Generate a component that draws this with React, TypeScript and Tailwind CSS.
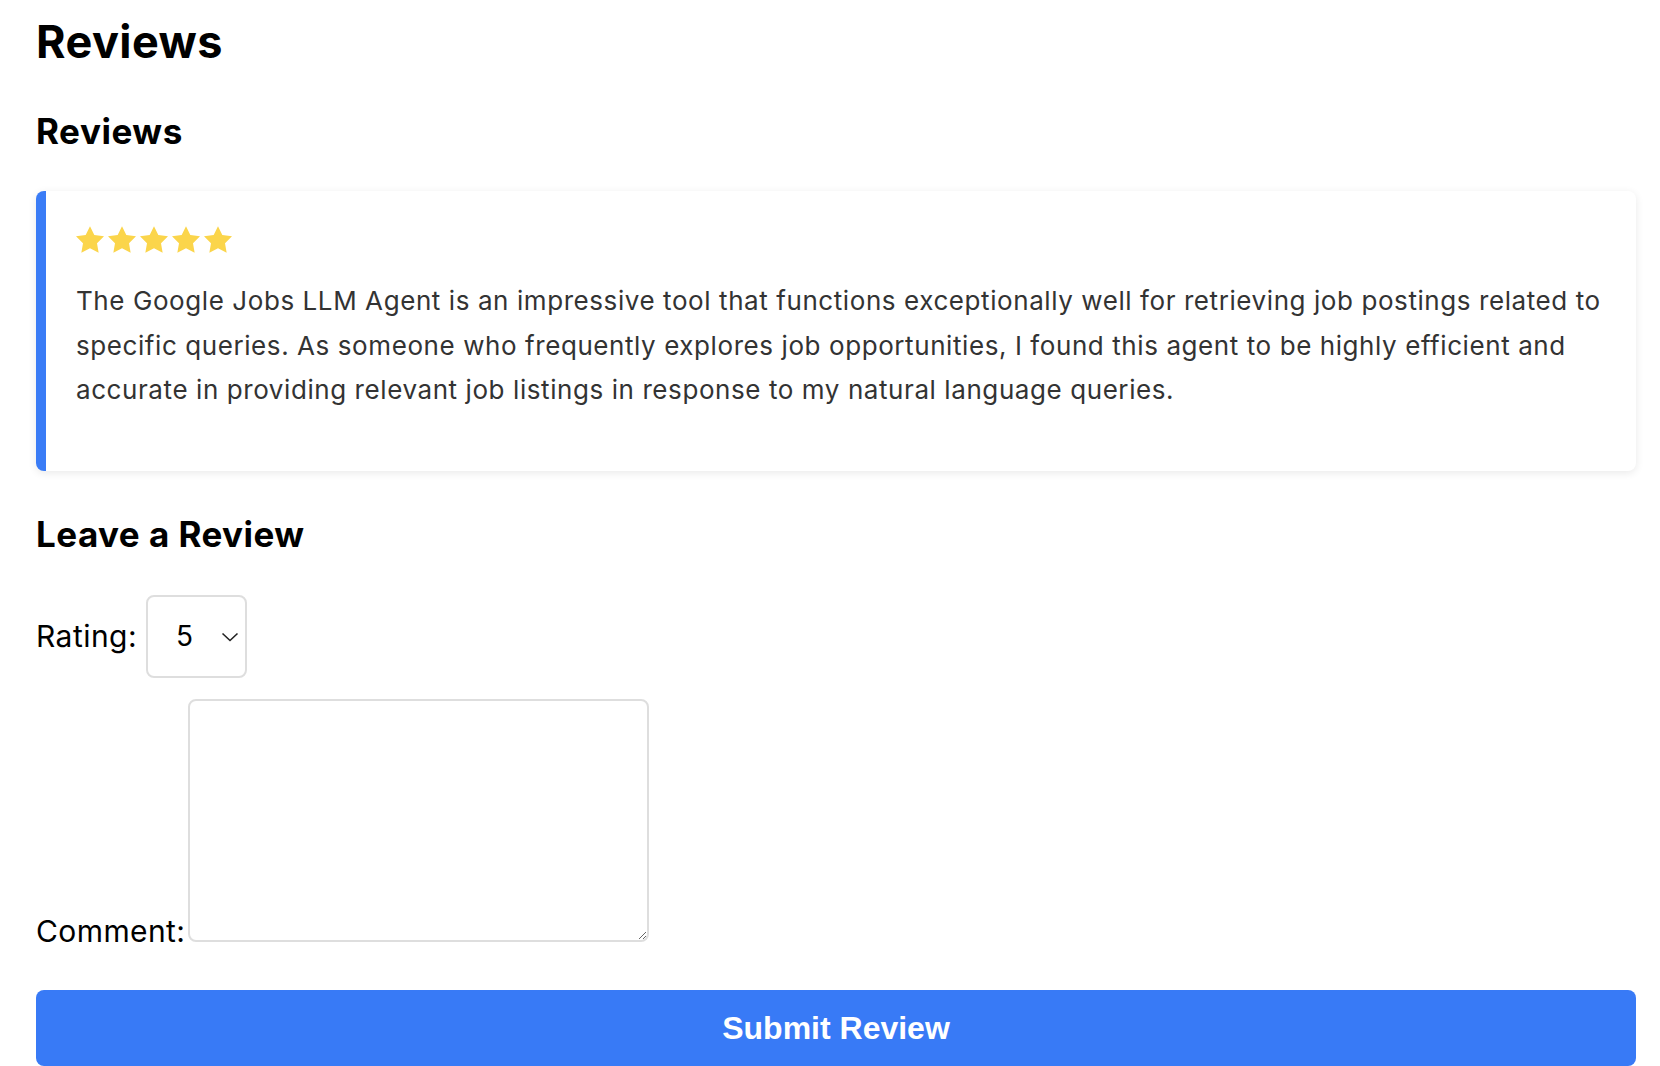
import React from "react";

const Star = () => (
  <svg width="28" height="27" viewBox="2 2 20 19.02" className="block">
    <path
      d="M12 2l3.09 6.26L22 9.27l-5 4.87 1.18 6.88L12 17.77l-6.18 3.25L7 14.14 2 9.27l6.91-1.01L12 2z"
      fill="#fbd54b"
    />
  </svg>
);

const App = () => {
  return (
    <div className="bg-white pl-[36px] pr-[24px] pt-[14px] font-['Inter',sans-serif] text-black">
      <h1 className="text-[45px] font-bold leading-[56px] tracking-[0.45px]">Reviews</h1>
      <h2 className="mt-[39px] text-[35px] font-bold leading-[44px] tracking-[0.55px]">Reviews</h2>

      <div className="mt-[38px] rounded-[8px] border-l-[10px] border-[#3a7cf6] bg-white pl-[30px] pr-[20px] pt-[35px] pb-[58px] shadow-[0_2px_8px_rgba(0,0,0,0.09)]">
        <div className="flex gap-[4px]">
          <Star />
          <Star />
          <Star />
          <Star />
          <Star />
        </div>
        <p className="mt-[26px] text-[26px] leading-[44.5px] tracking-[0.58px] text-[#333]">
          The Google Jobs LLM Agent is an impressive tool that functions exceptionally well for
          retrieving job postings related to specific queries. As someone who frequently explores
          job opportunities, I found this agent to be highly efficient and accurate in providing
          relevant job listings in response to my natural language queries.
        </p>
      </div>

      <h2 className="mt-[41px] text-[35px] font-bold leading-[44px] tracking-[0.45px]">
        Leave a Review
      </h2>

      <form>
        <div className="mt-[39px] flex items-center">
          <label className="text-[30px] leading-[36px] tracking-[0.45px]">Rating:</label>
          <div className="relative ml-[9px]">
            <select
              defaultValue="5"
              className="block h-[83px] w-[101px] appearance-none rounded-[8px] border-2 border-[#dedede] bg-white pl-[28px] font-['Inter',sans-serif] text-[28px] text-black outline-none"
            >
              <option value="1">1</option>
              <option value="2">2</option>
              <option value="3">3</option>
              <option value="4">4</option>
              <option value="5">5</option>
            </select>
            <svg
              width="18"
              height="10"
              viewBox="0 0 18 10"
              className="pointer-events-none absolute right-[8px] top-[37px]"
            >
              <path d="M1.5 1.5 L9 8.5 L16.5 1.5" fill="none" stroke="#222" strokeWidth="1.6" />
            </svg>
          </div>
        </div>

        <div className="mt-[21px] text-[30px] leading-[36px]">
          <label className="tracking-[0.4px]">Comment:</label>
          <textarea className="ml-[3px] h-[243px] w-[461px] rounded-[8px] border-2 border-[#dedede] bg-white outline-none" />
        </div>

        <button
          type="button"
          className="mt-[41px] block h-[76px] w-full rounded-[8px] bg-[#387af6] font-['Liberation_Sans',Arial,sans-serif] text-[32px] font-bold text-white"
        >
          Submit Review
        </button>
      </form>
    </div>
  );
};

export default App;
